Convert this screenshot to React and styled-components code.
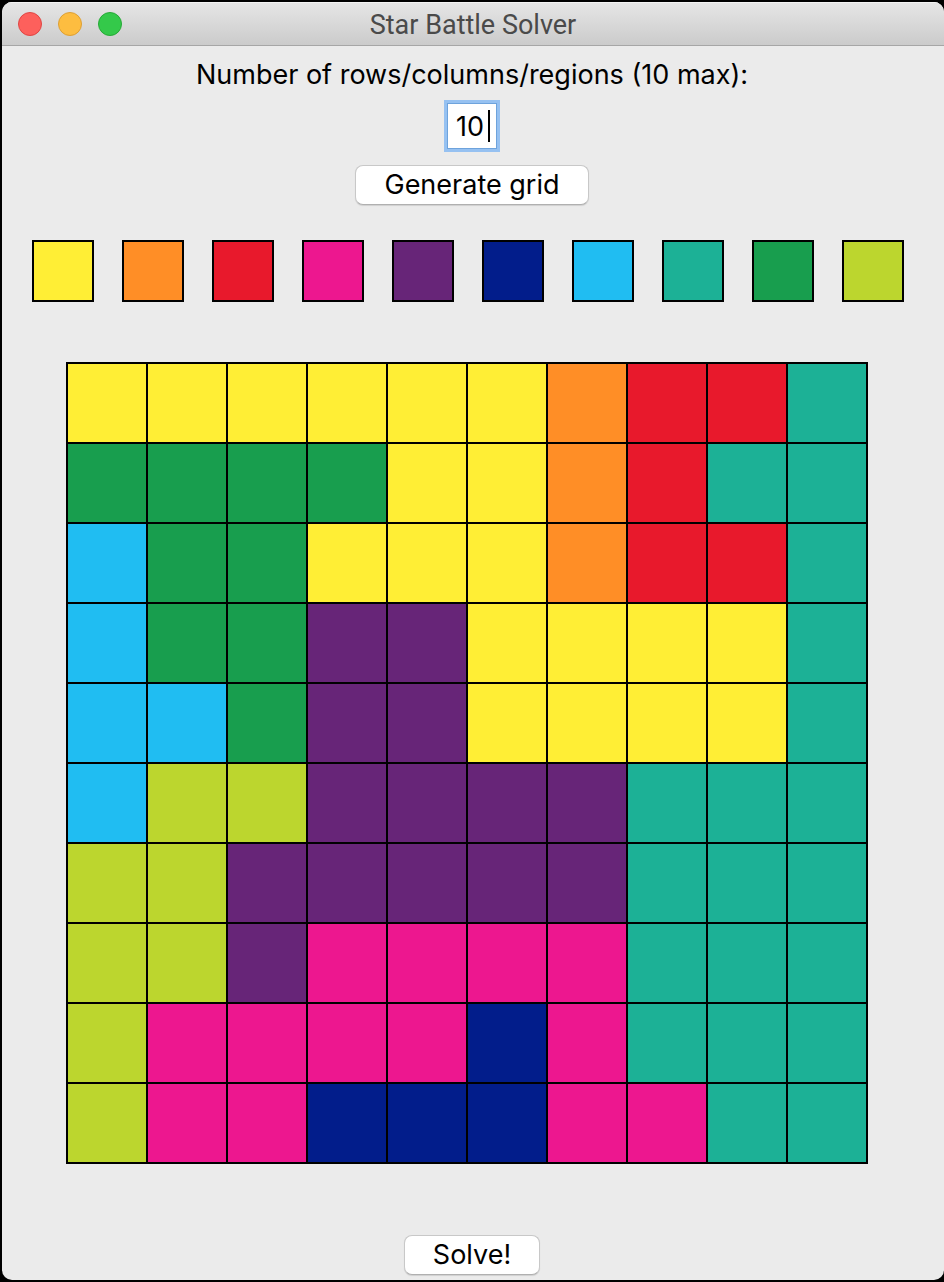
import React, { useState } from "react";
import styled, { createGlobalStyle } from "styled-components";

const GlobalStyle = createGlobalStyle`
  *, *::before, *::after { box-sizing: border-box; }
  body {
    margin: 0;
    background: #000;
    color: #000;
    font-family: Inter, "Liberation Sans", sans-serif;
  }
  button, input { font: inherit; color: inherit; }
`;

const Desktop = styled.div`
  min-height: 100vh;
  display: flex;
  padding: 2px 0 2px 2px;
`;

const Window = styled.main`
  flex: 1;
  min-width: 0;
  display: flex;
  flex-direction: column;
  background: #ebebeb;
  border-radius: 10px;
  overflow: hidden;
`;

const TitleBar = styled.header`
  display: grid;
  grid-template-columns: 1fr auto 1fr;
  align-items: center;
  height: 44px;
  padding: 0 16px;
  background: linear-gradient(#e6e6e6, #cbcbcb);
  border-bottom: 1px solid #a6a6a6;
  box-shadow: inset 0 1px #f3f3f3;
`;

const Lights = styled.div`
  display: flex;
  gap: 16px;
`;

const Light = styled.button`
  width: 24px;
  height: 24px;
  padding: 0;
  border-radius: 50%;
  border: 1px solid ${(p) => p.$edge};
  background: ${(p) => p.$fill};
`;

const Title = styled.h1`
  margin: 0;
  padding-top: 2px;
  font-family: Roboto, "Liberation Sans", sans-serif;
  font-size: 27px;
  line-height: 32px;
  font-weight: 400;
  color: #4a4a4a;
`;

const Setup = styled.form`
  display: flex;
  flex-direction: column;
  align-items: center;
  padding-top: 13px;
  padding-right: 2px;
`;

const Label = styled.label`
  font-size: 27px;
  line-height: 32px;
`;

const Field = styled.div`
  position: relative;
  margin: 9px 0 13px;
`;

const SizeInput = styled.input`
  display: block;
  width: 56px;
  height: 52px;
  padding: 0 0 0 9px;
  border: 3px solid #96c1f1;
  border-radius: 0;
  background: #fff;
  box-shadow: inset 0 0 0 1px #6ea3dc;
  font-size: 27px;
  outline: none;
  caret-color: transparent;
`;

const Caret = styled.span`
  position: absolute;
  top: 10px;
  right: 10px;
  width: 2px;
  height: 32px;
  background: #000;
`;

const PushButton = styled.button`
  height: 40px;
  padding: 0 28px;
  border: 1px solid #c8c8c8;
  border-bottom-color: #b0b0b0;
  border-radius: 8px;
  background: #fff;
  box-shadow: 0 1px 1px #d0d0d0;
  font-size: 27px;
  line-height: 32px;
`;

const Palette = styled.div`
  display: flex;
  justify-content: space-between;
  margin: 35px 40px 0 30px;
`;

const Swatch = styled.button`
  flex: 0 1 62px;
  aspect-ratio: 1;
  padding: 0;
  border: 2px solid #000;
  background: ${(p) => p.$color};
`;

const Board = styled.div`
  display: grid;
  grid-template-columns: repeat(10, 1fr);
  gap: 2px;
  margin: 60px 76px 0 64px;
  padding: 2px;
  background: #000;
`;

const Cell = styled.button`
  aspect-ratio: 1;
  min-width: 0;
  padding: 0;
  border: 0;
  background: ${(p) => p.$color};
`;

const Footer = styled.footer`
  display: flex;
  justify-content: center;
  margin-top: auto;
  padding: 24px 2px 5px 0;
`;

const COLORS = {
  Y: ["yellow", "#ffee35"],
  O: ["orange", "#ff8e26"],
  R: ["red", "#e8192c"],
  P: ["pink", "#ed178f"],
  V: ["purple", "#672578"],
  N: ["navy", "#021d8b"],
  B: ["blue", "#20bdf2"],
  T: ["teal", "#1cb196"],
  G: ["green", "#189e4e"],
  L: ["lime", "#bcd62e"],
};

const REGIONS = [
  "YYYYYYORRT",
  "GGGGYYORTT",
  "BGGYYYORRT",
  "BGGVVYYYYT",
  "BBGVVYYYYT",
  "BLLVVVVTTT",
  "LLVVVVVTTT",
  "LLVPPPPTTT",
  "LPPPPNPTTT",
  "LPPNNNPPTT",
];

export default function App() {
  const [size, setSize] = useState("10");
  const [brush, setBrush] = useState("Y");
  const [rows, setRows] = useState(REGIONS);

  const paint = (r, c) =>
    setRows(rows.map((row, i) => (i === r ? row.slice(0, c) + brush + row.slice(c + 1) : row)));

  return (
    <>
      <GlobalStyle />
      <Desktop>
        <Window>
          <TitleBar>
            <Lights>
              <Light aria-label="Close" $fill="#fd605c" $edge="#df4644" />
              <Light aria-label="Minimize" $fill="#fdbd40" $edge="#dd9f34" />
              <Light aria-label="Zoom" $fill="#34c94a" $edge="#27a937" />
            </Lights>
            <Title>Star Battle Solver</Title>
          </TitleBar>
          <Setup onSubmit={(e) => e.preventDefault()}>
            <Label htmlFor="size">Number of rows/columns/regions (10 max):</Label>
            <Field>
              <SizeInput
                id="size"
                maxLength={2}
                value={size}
                onChange={(e) => setSize(e.target.value)}
              />
              <Caret />
            </Field>
            <PushButton>Generate grid</PushButton>
          </Setup>
          <Palette>
            {Object.entries(COLORS).map(([key, [name, color]]) => (
              <Swatch key={key} type="button" aria-label={name} $color={color} onClick={() => setBrush(key)} />
            ))}
          </Palette>
          <Board>
            {rows.map((row, r) =>
              [...row].map((key, c) => (
                <Cell
                  key={`${r}-${c}`}
                  type="button"
                  aria-label={`Row ${r + 1}, column ${c + 1}, ${COLORS[key][0]}`}
                  $color={COLORS[key][1]}
                  onClick={() => paint(r, c)}
                />
              ))
            )}
          </Board>
          <Footer>
            <PushButton type="button">Solve!</PushButton>
          </Footer>
        </Window>
      </Desktop>
    </>
  );
}
